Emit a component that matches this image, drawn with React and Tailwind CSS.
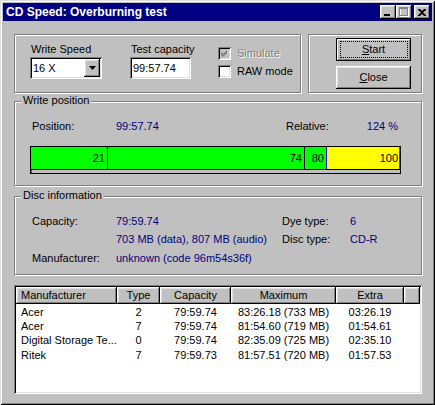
import React from 'react'

const raised = "shadow-[inset_-1px_-1px_#000,inset_1px_1px_#fff,inset_-2px_-2px_#808080,inset_2px_2px_#dfdfdf]"
const sunken = "shadow-[inset_1px_1px_#808080,inset_-1px_-1px_#fff,inset_2px_2px_#000,inset_-2px_-2px_#dfdfdf]"
const etched = "border border-[#808080] shadow-[inset_1px_1px_#fff,1px_1px_#fff]"

function TitleButton({ children }) {
    return (
        <div className={`w-[16px] h-[14px] bg-[#c0c0c0] flex items-center justify-center ${raised}`}>
            {children}
        </div>
    )
}

function GroupTitle({ children }) {
    return (
        <span className="absolute left-[6px] top-[-8px] px-[2px] bg-[#c0c0c0] leading-[13px]">{children}</span>
    )
}

function Check({ checked, disabled }) {
    return (
        <div className={`w-[13px] h-[13px] ${disabled ? 'bg-[#c0c0c0]' : 'bg-white'} ${sunken}`}>
            {checked && (
                <svg width="13" height="13" viewBox="0 0 13 13">
                    <path d="M3 5 L5 7 L9 3 L9 6 L5 10 L3 8 Z" fill={disabled ? '#808080' : '#000'} />
                </svg>
            )}
        </div>
    )
}

function Button({ children, isDefault }) {
    return (
        <div
            className={`relative w-[75px] h-[23px] flex items-center justify-center bg-[#c0c0c0] ${
                isDefault
                    ? 'border border-black shadow-[inset_1px_1px_#fff,inset_-1px_-1px_#808080]'
                    : raised
            }`}
        >
            {isDefault && (
                <span className="absolute left-[3px] right-[2px] top-[2px] bottom-[2px] border border-dotted border-black" />
            )}
            <span className="leading-[13px]">{children}</span>
        </div>
    )
}

const columns = [
    { name: 'Manufacturer', w: 'w-[101px]', left: true },
    { name: 'Type', w: 'w-[43px]' },
    { name: 'Capacity', w: 'w-[71px]' },
    { name: 'Maximum', w: 'w-[105px]' },
    { name: 'Extra', w: 'w-[68px]' },
]

const rows = [
    ['Acer', '2', '79:59.74', '83:26.18 (733 MB)', '03:26.19'],
    ['Acer', '7', '79:59.74', '81:54.60 (719 MB)', '01:54.61'],
    ['Digital Storage Te...', '0', '79:59.74', '82:35.09 (725 MB)', '02:35.10'],
    ['Ritek', '7', '79:59.73', '81:57.51 (720 MB)', '01:57.53'],
]

function App() {
    return (
        <div className="w-[435px] h-[405px] bg-[#c0c0c0] p-[3px] flex flex-col font-['Liberation_Sans',Arial,sans-serif] text-[11px] leading-[13px] text-black whitespace-nowrap shadow-[inset_1px_1px_#dfdfdf,inset_-1px_-1px_#000,inset_2px_2px_#fff,inset_-2px_-2px_#808080]">
            {/* title bar */}
            <div className="h-[18px] bg-[#000080] flex items-center pl-[3px] pr-[2px]">
                <span className="text-white font-bold text-[12px] leading-[14px]">CD Speed: Overburning test</span>
                <div className="ml-auto flex items-center">
                    <TitleButton>
                        <svg width="8" height="7" viewBox="0 0 8 7"><rect x="0" y="5" width="6" height="2" fill="#000" /></svg>
                    </TitleButton>
                    <TitleButton>
                        <svg width="10" height="10" viewBox="0 0 10 10">
                            <rect x="1.5" y="1.5" width="8" height="8" fill="none" stroke="#fff" />
                            <rect x="0.5" y="0.5" width="8" height="8" fill="none" stroke="#808080" />
                            <rect x="0" y="1" width="9" height="1" fill="#808080" />
                        </svg>
                    </TitleButton>
                    <div className="ml-[2px]">
                        <TitleButton>
                            <svg width="8" height="7" viewBox="0 0 8 7">
                                <path d="M0 0h2l2 2l2-2h2v1l-3 2.5l3 2.5v1h-2l-2-2l-2 2h-2v-1l3-2.5l-3-2.5z" fill="#000" />
                            </svg>
                        </TitleButton>
                    </div>
                </div>
            </div>

            <div className="flex flex-col pl-[11px] pr-[10px] pt-[13px]">
                {/* top row */}
                <div className="flex gap-[7px] h-[59px]">
                    <div className={`w-[287px] ${etched} pt-[8px] pl-[15px] flex items-start`}>
                        <div className="w-[72px] flex flex-col">
                            <span className="pl-[1px]">Write Speed</span>
                            <div className={`mt-[1px] h-[22px] bg-white ${sunken} flex items-center pl-[3px] pr-[2px]`}>
                                <span>16 X</span>
                                <div className={`ml-auto w-[16px] h-[18px] bg-[#c0c0c0] ${raised} flex items-center justify-center`}>
                                    <svg width="7" height="4" viewBox="0 0 7 4"><path d="M0 0h7l-3.5 4z" fill="#000" /></svg>
                                </div>
                            </div>
                        </div>
                        <div className="ml-[28px] w-[61px] flex flex-col">
                            <span className="pl-[1px]">Test capacity</span>
                            <div className={`mt-[1px] h-[22px] bg-white ${sunken} flex items-center pl-[3px]`}>
                                <span>99:57.74</span>
                            </div>
                        </div>
                        <div className="ml-[27px] mt-[4px] flex flex-col gap-[5px]">
                            <div className="flex items-center gap-[6px]">
                                <Check checked disabled />
                                <span className="text-[#808080] [text-shadow:1px_1px_#fff]">Simulate</span>
                            </div>
                            <div className="flex items-center gap-[6px]">
                                <Check />
                                <span>RAW mode</span>
                            </div>
                        </div>
                    </div>
                    <div className={`flex-1 ${etched} pt-[3px] pl-[27px] flex flex-col gap-[5px]`}>
                        <Button isDefault><span className="underline">S</span>tart</Button>
                        <Button><span className="underline">C</span>lose</Button>
                    </div>
                </div>

                {/* write position */}
                <div className={`relative mt-[8px] h-[85px] ${etched} pt-[18px] pl-[15px]`}>
                    <GroupTitle>Write position</GroupTitle>
                    <div className="w-[371px] flex pl-[2px] pr-[3px]">
                        <span className="w-[84px]">Position:</span>
                        <span className="w-[170px] text-[#000080]">99:57.74</span>
                        <span>Relative:</span>
                        <span className="ml-auto text-[#000080]">124 %</span>
                    </div>
                    <div className="mt-[13px] w-[371px] h-[28px] border border-black flex flex-col">
                        <div className="h-[22px] flex">
                            <div className="w-[77px] bg-[#00ff00] border-r border-black flex items-center justify-end pr-[2px]">21</div>
                            <div className="w-[197px] bg-[#00ff00] border-r border-black flex items-center justify-end pr-[2px]">74</div>
                            <div className="w-[22px] bg-[#00ff00] border-r border-[#0000ff] flex items-center justify-end pr-[2px]">80</div>
                            <div className="flex-1 bg-[#ffff00] border-r border-[#ff0000] flex items-center justify-end pr-[1px]">100</div>
                        </div>
                        <div className="flex-1 border-t border-black bg-[#c0c0c0] flex">
                            <div className="w-[1px] bg-[#00a000]" />
                        </div>
                    </div>
                </div>

                {/* disc information */}
                <div className={`relative mt-[10px] h-[79px] ${etched} pt-[15px] pl-[17px]`}>
                    <GroupTitle>Disc information</GroupTitle>
                    <div className="flex h-[18px] items-center">
                        <span className="w-[84px]">Capacity:</span>
                        <span className="w-[166px] text-[#000080]">79:59.74</span>
                        <span className="w-[68px]">Dye type:</span>
                        <span className="text-[#000080]">6</span>
                    </div>
                    <div className="flex h-[18px] items-center">
                        <span className="w-[84px]" />
                        <span className="w-[166px] text-[#000080]">703 MB (data), 807 MB (audio)</span>
                        <span className="w-[68px]">Disc type:</span>
                        <span className="text-[#000080]">CD-R</span>
                    </div>
                    <div className="flex h-[18px] items-center mt-[1px]">
                        <span className="w-[84px]">Manufacturer:</span>
                        <span className="text-[#000080]">unknown (code 96m54s36f)</span>
                    </div>
                </div>

                {/* list */}
                <div className={`mt-[10px] h-[109px] bg-white p-[2px] ${sunken}`}>
                    <div className="flex h-[17px]">
                        {columns.map((c) => (
                            <div
                                key={c.name}
                                className={`${c.w} bg-[#c0c0c0] ${raised} flex items-center ${c.left ? 'pl-[5px]' : 'justify-center'}`}
                            >
                                {c.name}
                            </div>
                        ))}
                        <div className={`flex-1 bg-[#c0c0c0] ${raised}`} />
                    </div>
                    <div className="pt-[1px]">
                        {rows.map((r, i) => (
                            <div key={i} className="flex h-[14.3px] items-center">
                                {r.map((v, j) => (
                                    <span
                                        key={j}
                                        className={`${columns[j].w} ${j === 0 ? 'pl-[5px]' : 'text-center'}`}
                                    >
                                        {v}
                                    </span>
                                ))}
                            </div>
                        ))}
                    </div>
                </div>
            </div>
        </div>
    )
}

export default App
